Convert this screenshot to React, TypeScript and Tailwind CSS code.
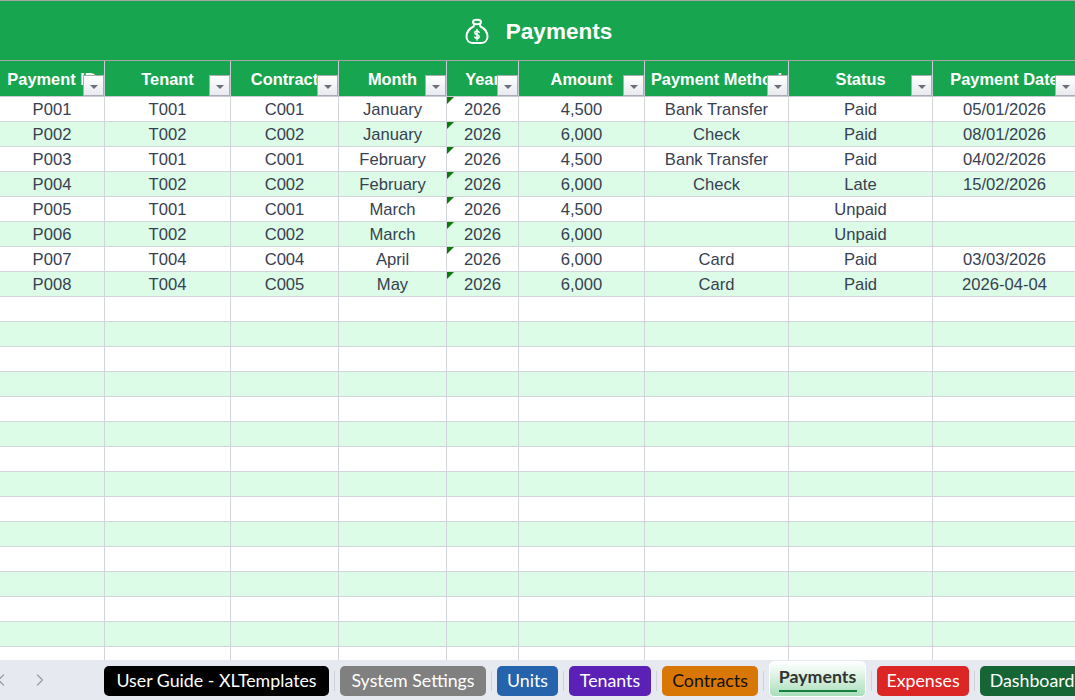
import { ChevronLeft, ChevronRight } from 'lucide-react';

const columns = ['Payment ID', 'Tenant', 'Contract', 'Month', 'Year', 'Amount', 'Payment Method', 'Status', 'Payment Date'];

const payments = [
  ['P001', 'T001', 'C001', 'January', '2026', '4,500', 'Bank Transfer', 'Paid', '05/01/2026'],
  ['P002', 'T002', 'C002', 'January', '2026', '6,000', 'Check', 'Paid', '08/01/2026'],
  ['P003', 'T001', 'C001', 'February', '2026', '4,500', 'Bank Transfer', 'Paid', '04/02/2026'],
  ['P004', 'T002', 'C002', 'February', '2026', '6,000', 'Check', 'Late', '15/02/2026'],
  ['P005', 'T001', 'C001', 'March', '2026', '4,500', '', 'Unpaid', ''],
  ['P006', 'T002', 'C002', 'March', '2026', '6,000', '', 'Unpaid', ''],
  ['P007', 'T004', 'C004', 'April', '2026', '6,000', 'Card', 'Paid', '03/03/2026'],
  ['P008', 'T004', 'C005', 'May', '2026', '6,000', 'Card', 'Paid', '2026-04-04'],
];

const emptyRows = Array.from({ length: 15 }, () => ['', '', '', '', '', '', '', '', '']);

const tabs = [
  { name: 'User Guide - XLTemplates', cls: 'w-[225px] bg-black text-white' },
  { name: 'System Settings', cls: 'w-[146px] bg-[#808080] text-white' },
  { name: 'Units', cls: 'w-[61px] bg-[#2563ad] text-white' },
  { name: 'Tenants', cls: 'w-[82px] bg-[#5b21b6] text-white' },
  { name: 'Contracts', cls: 'w-[96px] bg-[#d97706] text-[#111]' },
];

const gridCols = 'grid grid-cols-[105px_126px_108px_108px_72px_126px_144px_144px_144px]';

function FilterButton() {
  return (
    <div className="absolute right-0 top-[14px] flex h-[21px] w-[21px] items-center justify-center border border-[#a9adb5] bg-gradient-to-b from-white to-[#e8eaf0]">
      <div className="mt-[3px] h-0 w-0 border-x-[4px] border-t-[4px] border-x-transparent border-t-[#6b6f76]" />
    </div>
  );
}

function MoneyBag() {
  return (
    <svg width="26" height="27" viewBox="0 0 26 27" fill="none" stroke="white" strokeWidth="2" strokeLinecap="round" strokeLinejoin="round">
      <ellipse cx="13" cy="4" rx="4" ry="2.2" />
      <path d="M10 6.500 9.500 8.500C5.500 10.500 2.500 14.500 2.500 18.500c0 3.800 2.800 6.500 6.500 6.500h8c3.700 0 6.500-2.700 6.500-6.500 0-4-3-8-7-10l-.5-2" />
      <path strokeWidth="1.500" d="M15.200 14.300c-.4-.8-1.200-1.200-2.200-1.200-1.300 0-2.200.7-2.200 1.800 0 2.400 4.400 1.200 4.400 3.600 0 1.100-.9 1.800-2.200 1.800-1 0-1.800-.4-2.200-1.200M13 11.500v10.500" />
    </svg>
  );
}

export default function App() {
  return (
    <div className="h-[700px] w-[1075px] overflow-hidden bg-white font-['Liberation_Sans',sans-serif]">
      <div className="flex h-[61px] items-center justify-center gap-[16px] border-y border-[#a6a6a6] bg-[#18a54f] pt-[1px] pl-[1px]">
        <MoneyBag />
        <span className="mt-[1px] text-[22.500px] font-bold text-white">Payments</span>
      </div>

      <div className="h-[599px] overflow-hidden">
        <div className={`${gridCols} h-[36px] border-b border-[#c9ccd4] bg-[#18a54f]`}>
          {columns.map((col) => (
            <div key={col} className="relative overflow-hidden border-r border-[#c9ccd4] pt-[1px] text-center text-[16.400px] leading-[35px] font-bold whitespace-nowrap text-white">
              {col}
              <FilterButton />
            </div>
          ))}
        </div>

        {[...payments, ...emptyRows].map((row, i) => (
          <div key={i} className={`${gridCols} h-[25px] border-b border-[#d2d4db] ${i % 2 === 0 ? 'bg-white' : 'bg-[#dcfce7]'}`}>
            {row.map((cell, j) => (
              <div key={j} className="relative border-r border-[#d2d4db] pt-[1px] text-center text-[16.600px] leading-[24px] whitespace-nowrap text-[#374151]">
                {cell}
                {j === 4 && cell && (
                  <div className="absolute top-0 left-0 h-0 w-0 border-t-[7px] border-r-[7px] border-t-[#0b7a0b] border-r-transparent" />
                )}
              </div>
            ))}
          </div>
        ))}
      </div>

      <div className="flex h-[40px] items-start bg-[#e6e9ef] font-['Lato',sans-serif] text-[17.800px]">
        <div className="flex h-[40px] w-[104px] shrink-0 items-center text-[#9a9da3]">
          <ChevronLeft className="ml-[-9px] h-[20px] w-[20px]" strokeWidth={1.500} />
          <ChevronRight className="ml-[19px] h-[20px] w-[20px]" strokeWidth={1.500} />
        </div>
        {tabs.map((tab) => (
          <div key={tab.name} className="flex shrink-0 items-start">
            <div className={`mt-[6px] flex h-[30px] items-center justify-center rounded-[5px] pb-[2px] whitespace-nowrap ${tab.cls}`}>{tab.name}</div>
            <div className="mx-[5px] mt-[11px] h-[20px] w-[1px] bg-[#cfd2d8]" />
          </div>
        ))}
        <div className="relative mt-[1px] flex h-[36px] w-[97px] shrink-0 flex-col items-center rounded-[5px] border border-white bg-gradient-to-b from-white to-[#a8dfbb] pt-[1px] text-[17.800px] font-bold text-[#333]">
          Payments
          <div className="absolute top-[28px] h-[2px] w-[78px] bg-[#15803d]" />
        </div>
        <div className="mx-[5px] mt-[11px] h-[20px] w-[1px] shrink-0 bg-[#cfd2d8]" />
        <div className="mt-[6px] flex h-[30px] w-[92px] shrink-0 items-center justify-center rounded-[5px] bg-[#dc2626] pb-[2px] text-white">Expenses</div>
        <div className="mx-[5px] mt-[11px] h-[20px] w-[1px] shrink-0 bg-[#cfd2d8]" />
        <div className="mt-[6px] flex h-[30px] w-[104px] shrink-0 items-center justify-center rounded-[5px] bg-[#166534] pb-[2px] whitespace-nowrap text-white">Dashboard</div>
      </div>
    </div>
  );
}
